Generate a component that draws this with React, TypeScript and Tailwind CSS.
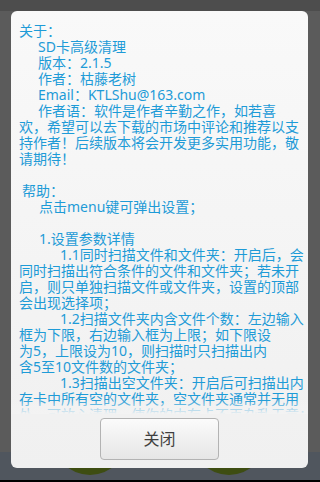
const lines: [string, string][] = [
  ['关于：', ''],
  ['SD卡高级清理', 'pl-[19px]'],
  ['版本：2.1.5', 'pl-[19px]'],
  ['作者：枯藤老树', 'pl-[19px]'],
  ['Email：KTLShu@163.com', 'pl-[19px]'],
  ['作者语：软件是作者辛勤之作，如若喜', 'pl-[19px]'],
  ['欢，希望可以去下载的市场中评论和推荐以支', ''],
  ['持作者！后续版本将会开发更多实用功能，敬', ''],
  ['请期待！', ''],
  ['', ''],
  ['帮助：', 'pl-[3px]'],
  ['点击menu键可弹出设置；', 'pl-[20px]'],
  ['', ''],
  ['1.设置参数详情', 'pl-[20px]'],
  ['1.1同时扫描文件和文件夹：开启后，会', 'pl-[41px]'],
  ['同时扫描出符合条件的文件和文件夹；若未开', ''],
  ['启，则只单独扫描文件或文件夹，设置的顶部', ''],
  ['会出现选择项；', ''],
  ['1.2扫描文件夹内含文件个数：左边输入', 'pl-[41px]'],
  ['框为下限，右边输入框为上限；如下限设', ''],
  ['为5，上限设为10，则扫描时只扫描出内', ''],
  ['含5至10文件数的文件夹；', ''],
  ['1.3扫描出空文件夹：开启后可扫描出内', 'pl-[41px]'],
  ['存卡中所有空的文件夹，空文件夹通常并无用', ''],
  ['处，可放心清理，使你的内存卡不再杂乱无章；', ''],
];

export default function App() {
  return (
    <div className="relative w-[320px] h-[482px] flex flex-col overflow-hidden font-['Noto_Sans','Noto_Sans_CJK_SC',sans-serif]">
      {/* dimmed activity behind the dialog */}
      <div className="h-[11px] bg-[#4d4d4d]" />
      <div className="flex-1 bg-[#5b5b5b]" />
      <div className="relative h-[28px] bg-[#50565e]">
        <div className="absolute left-[52px] top-[-53px] w-[76px] h-[76px] rounded-full bg-[#3e4d12]" />
        <div className="absolute left-[191px] top-[-53px] w-[76px] h-[76px] rounded-full bg-[#3e4d12]" />
      </div>
      <div className="h-[2px] bg-black" />

      {/* about dialog */}
      <div className="absolute left-[11px] top-[11px] w-[297px] h-[457px] rounded-[6px] bg-linear-to-b from-[#f9f9f9] to-[#f0f0f0] flex flex-col">
        <div className="relative h-[403px] overflow-hidden pt-[12px] pl-[8px] text-[14px] text-[#1e9bd7]">
          {lines.map(([text, indent], i) => (
            <div key={i} className={`h-[16px] leading-[16px] whitespace-pre ${indent}`}>
              {text}
            </div>
          ))}
          <div className="absolute left-0 right-0 bottom-0 h-[14px] bg-linear-to-b from-[#f3f3f300] to-[#f3f3f3]" />
        </div>
        <div className="pt-[4px] flex justify-center">
          <button className="w-[119px] h-[42px] rounded-[4px] border border-[#b3b3b3] bg-linear-to-b from-[#fbfbfb] to-[#e6e6e6] text-[16px] text-[#3f3f3f] leading-none">
            关闭
          </button>
        </div>
      </div>
    </div>
  );
}
